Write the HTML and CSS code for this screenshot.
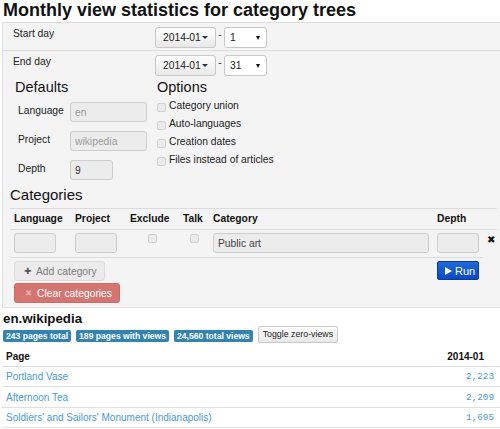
FILE: index.html
```html
<!DOCTYPE html>
<html>
<head>
<meta charset="utf-8">
<title>Monthly view statistics for category trees</title>
<link rel="stylesheet" href="styles.css">
</head>
<body>
<div class="page">
  <h1 class="title">Monthly view statistics for category trees</h1>
  <div class="well">
    <div class="date-row">
      <div class="date-label">Start day</div>
      <div class="date-ctrls">
        <span class="month-btn">2014-01<span class="caret"></span></span>
        <span class="dash">-</span>
        <span class="day-sel"><span class="day-val">1</span><span class="caret-dark"></span></span>
      </div>
    </div>
    <div class="date-row">
      <div class="date-label">End day</div>
      <div class="date-ctrls">
        <span class="month-btn">2014-01<span class="caret"></span></span>
        <span class="dash">-</span>
        <span class="day-sel"><span class="day-val">31</span><span class="caret-dark"></span></span>
      </div>
    </div>

    <div class="settings">
      <div class="defaults">
        <h4 class="sub">Defaults</h4>
        <div class="frow"><span class="flabel">Language</span><span class="inp wide muted">en</span></div>
        <div class="frow"><span class="flabel">Project</span><span class="inp wide muted">wikipedia</span></div>
        <div class="frow"><span class="flabel">Depth</span><span class="inp narrow">9</span></div>
      </div>
      <div class="options">
        <h4 class="sub">Options</h4>
        <div class="opt"><span class="cb"></span>Category union</div>
        <div class="opt"><span class="cb"></span>Auto-languages</div>
        <div class="opt"><span class="cb"></span>Creation dates</div>
        <div class="opt"><span class="cb"></span>Files instead of articles</div>
      </div>
    </div>

    <h4 class="sub cat-h">Categories</h4>
    <div class="cat-grid">
      <div class="ch">Language</div>
      <div class="ch">Project</div>
      <div class="ch">Exclude</div>
      <div class="ch">Talk</div>
      <div class="ch">Category</div>
      <div class="ch">Depth</div>
      <div class="ch"></div>

      <div class="cc"><span class="inp small"></span></div>
      <div class="cc"><span class="inp small"></span></div>
      <div class="cc center"><span class="cb tcb"></span></div>
      <div class="cc center"><span class="cb tcb"></span></div>
      <div class="cc"><span class="inp catinp">Public art</span></div>
      <div class="cc"><span class="inp small"></span></div>
      <div class="cc xcell"><span class="xicon">✖</span></div>

      <div class="cc span5">
        <div class="btn-stack">
          <span class="btn add-btn"><span class="plus">✚</span>Add category</span>
          <span class="btn clear-btn"><span class="xs">✖</span>Clear categories</span>
        </div>
      </div>
      <div class="cc"><span class="btn run-btn"><svg class="play" width="7" height="8" viewBox="0 0 7 8"><polygon points="0,0 7,4 0,8" fill="#fff"/></svg>Run</span></div>
      <div class="empty"></div>
    </div>
  </div>

  <h3 class="wiki">en.wikipedia</h3>
  <div class="badges">
    <span class="badge">243 pages total</span>
    <span class="badge">189 pages with views</span>
    <span class="badge">24,560 total views</span>
    <span class="toggle">Toggle zero-views</span>
  </div>

  <table class="results">
    <thead>
      <tr><th>Page</th><th class="num">2014-01</th></tr>
    </thead>
    <tbody>
      <tr><td><a href="#">Portland Vase</a></td><td class="num"><a href="#">2,223</a></td></tr>
      <tr><td><a href="#">Afternoon Tea</a></td><td class="num"><a href="#">2,209</a></td></tr>
      <tr><td><a href="#">Soldiers' and Sailors' Monument (Indianapolis)</a></td><td class="num"><a href="#">1,695</a></td></tr>
    </tbody>
  </table>
</div>
</body>
</html>
```
FILE: styles.css
```css
html, body {
  margin: 0;
  padding: 0;
  background: #fff;
}
body {
  font-family: "Liberation Sans", Arial, sans-serif;
  font-size: 10.3px;
  color: #333;
  overflow: hidden;
}
.page {
  padding-left: 2px;
}
.title {
  margin: 0;
  padding-left: 1px;
  height: 22px;
  font-size: 18px;
  line-height: 20px;
  font-weight: bold;
  color: #111;
}
.well {
  width: 520px;
  background: #f4f4f4;
  border: 1px solid #e1e1e1;
  border-top-color: #dcdcdc;
  border-right: none;
  box-sizing: border-box;
}
/* date rows */
.date-row {
  display: flex;
  padding: 4px 0 2px;
}
.date-row + .date-row {
  border-top: 1px solid #dedede;
}
.date-label {
  width: 142px;
  padding-left: 10px;
  line-height: 14px;
  color: #222;
}
.date-ctrls {
  display: flex;
  align-items: center;
  height: 21px;
}
.month-btn {
  box-sizing: border-box;
  display: inline-flex;
  align-items: center;
  width: 61px;
  height: 21px;
  padding-left: 7px;
  border: 1px solid #c8c8c8;
  border-radius: 3px;
  background: linear-gradient(#ffffff, #e8e8e8);
  color: #222;
}
.caret {
  display: inline-block;
  margin-left: 1px;
  width: 0;
  height: 0;
  border-left: 3px solid transparent;
  border-right: 3px solid transparent;
  border-top: 3px solid #333;
}
.dash {
  width: 8px;
  text-align: center;
  margin-top: -6px;
  color: #333;
}
.day-sel {
  box-sizing: border-box;
  display: inline-flex;
  align-items: center;
  justify-content: space-between;
  width: 43px;
  height: 21px;
  padding: 0 6px 0 5px;
  border: 1px solid #c8c8c8;
  border-radius: 3px;
  background: #fff;
  color: #222;
}
.caret-dark {
  display: inline-block;
  width: 0;
  height: 0;
  border-left: 2.5px solid transparent;
  border-right: 2.5px solid transparent;
  border-top: 4px solid #111;
}
/* defaults / options */
.settings {
  display: flex;
  padding-left: 12px;
}
.sub {
  margin: 1px 0 0;
  font-size: 14.5px;
  line-height: 17px;
  font-weight: normal;
  color: #111;
}
.defaults {
  width: 142px;
}
.frow {
  display: flex;
  align-items: flex-start;
  height: 20px;
  margin-top: 9px;
}
.defaults .sub + .frow {
  margin-top: 6px;
}
.flabel {
  box-sizing: border-box;
  width: 55px;
  padding-left: 3px;
  padding-top: 2px;
  line-height: 14px;
  color: #222;
}
.inp {
  box-sizing: border-box;
  display: inline-block;
  height: 20px;
  padding: 0 4px;
  border: 1px solid #cdcdcd;
  border-radius: 3px;
  background: #ececec;
  line-height: 19px;
  color: #333;
}
.inp.muted {
  color: #9a9a9a;
}
.inp.wide {
  width: 77px;
}
.inp.narrow {
  width: 43px;
}
.inp.small {
  width: 42px;
}
.inp.catinp {
  width: 216px;
  color: #444;
}
.options {
  display: flex;
  flex-direction: column;
}
.opt {
  display: flex;
  align-items: center;
  height: 18px;
  color: #222;
}
.cb {
  box-sizing: border-box;
  display: inline-block;
  width: 9px;
  height: 9px;
  margin-right: 3px;
  margin-top: 4px;
  border: 1px solid #d2d2d2;
  border-radius: 2px;
  background: #ebebeb;
}
/* categories */
.cat-h {
  margin: 6px 0 0 7px;
  font-size: 15px;
  line-height: 18px;
}
.cat-grid {
  display: grid;
  grid-template-columns: 61px 55px 53px 30px 224px 50px 14px;
  margin: 4px 0 0 7px;
}
.ch {
  box-sizing: border-box;
  height: 21px;
  padding: 0 4px;
  border-top: 1px solid #dcdcdc;
  line-height: 20px;
  font-weight: bold;
  color: #111;
}
.cc {
  padding: 3px 4px 4px;
  border-top: 1px solid #dcdcdc;
  display: flex;
  align-items: flex-start;
}
.cc.center {
  justify-content: center;
}
.tcb {
  margin: 1px 0 0;
}
.xcell {
  padding: 4px 0 0 4px;
}
.xicon {
  font-family: "DejaVu Sans", sans-serif;
  font-size: 10px;
  line-height: 11px;
  color: #111;
}
.span5 {
  grid-column: 1 / 6;
}
.empty {
  border-top: none;
}
.btn-stack {
  display: flex;
  flex-direction: column;
  align-items: flex-start;
  gap: 2px;
}
.btn {
  box-sizing: border-box;
  display: inline-flex;
  align-items: center;
  height: 20px;
  border-radius: 3px;
  white-space: nowrap;
}
.add-btn {
  width: 91px;
  padding-left: 9px;
  border: 1px solid #dcdcdc;
  background: #ebebeb;
  color: #7c7c7c;
}
.plus {
  font-family: "DejaVu Sans", sans-serif;
  font-size: 8.5px;
  width: 12px;
  color: #555;
}
.clear-btn {
  width: 106px;
  padding-left: 10px;
  border: 1px solid #c96b68;
  background: #d47572;
  color: #fff;
}
.xs {
  font-family: "DejaVu Sans", sans-serif;
  font-size: 8.5px;
  width: 12px;
  color: #e3aaa8;
}
.run-btn {
  width: 42px;
  height: 19px;
  padding-left: 7px;
  border: 1px solid #0a3aa0;
  background: linear-gradient(#1f6ad8, #0b48c2);
  border-radius: 2px;
  color: #fff;
  font-size: 11px;
}
.play {
  margin-right: 3px;
}
/* results */
.wiki {
  margin: 3px 0 0 1px;
  font-size: 13.3px;
  line-height: 16px;
  font-weight: bold;
  color: #111;
}
.badges {
  display: flex;
  align-items: center;
  gap: 5px;
  height: 17px;
  margin: -1px 0 0 1px;
}
.badge {
  padding: 0 3px;
  height: 12px;
  margin-top: 2px;
  line-height: 12px;
  border-radius: 2px;
  background: #3283b0;
  color: #fff;
  font-weight: bold;
  font-size: 8.6px;
  white-space: nowrap;
}
.toggle {
  box-sizing: border-box;
  height: 17px;
  padding: 0 4px;
  line-height: 15px;
  border: 1px solid #c9c9c9;
  border-radius: 2px;
  background: linear-gradient(#ffffff, #e8e8e8);
  font-size: 8.8px;
  color: #222;
  white-space: nowrap;
}
.results {
  width: 498px;
  margin-top: 3px;
  border-collapse: collapse;
  font-size: 10px;
}
.results th {
  height: 20px;
  padding: 0 4px;
  text-align: left;
  font-weight: bold;
  color: #111;
  border-bottom: 1px solid #dcdcdc;
}
.results th.num {
  text-align: right;
  padding-right: 16px;
}
.results td {
  height: 19.4px;
  padding: 0 4px;
  border-bottom: 1px solid #e0e0e0;
}
.results td.num {
  text-align: right;
  padding-right: 6px;
  font-family: "Liberation Mono", monospace;
  font-size: 9.3px;
}
.results a {
  color: #4b9ad8;
  text-decoration: none;
}
```
